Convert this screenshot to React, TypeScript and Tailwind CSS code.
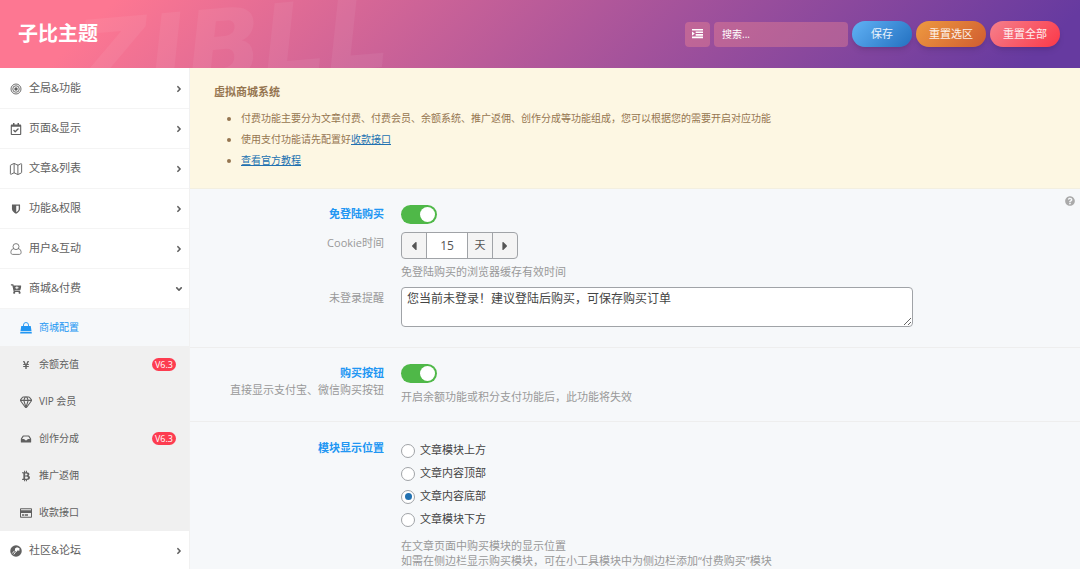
import { useState } from "react"
import type { ComponentType, ReactNode } from "react"
import cn from "clsx"
import { Gem, Map } from "lucide-react"
import {
  FaAngleDown,
  FaAngleRight,
  FaBtc,
  FaCaretLeft,
  FaCaretRight,
  FaCartPlus,
  FaInbox,
  FaQuestionCircle,
  FaRegCalendarCheck,
  FaRegCreditCard,
  FaYenSign,
} from "react-icons/fa"

type IconType = ComponentType<{ className?: string }>

type MenuItem = {
  label: string;
  icon: IconType;
  iconClass?: string;
  badge?: string;
  active?: boolean;
  children?: MenuItem[];
};

function TargetIcon({ className }: { className?: string }) {
  return (
    <svg viewBox="0 0 24 24" className={className} fill="none" stroke="currentColor" strokeWidth="1.8">
      <circle cx="12" cy="12" r="10" />
      <circle cx="12" cy="12" r="6.5" />
      <circle cx="12" cy="12" r="3.5" fill="currentColor" stroke="none" />
    </svg>
  );
}

function ShieldIcon({ className }: { className?: string }) {
  return (
    <svg viewBox="0 0 24 24" className={className}>
      <path d="M3 2h18v10c0 5-5 8.500-9 10.500C8 20.500 3 17 3 12z" fill="currentColor" />
      <path d="M12.500 5H18v7c0 3-2.500 5.500-5.500 7z" fill="#fff" />
    </svg>
  );
}

function UserIcon({ className }: { className?: string }) {
  return (
    <svg viewBox="0 0 24 24" className={className} fill="none" stroke="currentColor" strokeWidth="1.6">
      <circle cx="12" cy="7.2" r="6" />
      <path d="M7.6 11.2C3 11.600 1.800 16 1.800 19c0 2.200 1.400 3.800 3.400 3.800h13.600c2 0 3.400-1.600 3.400-3.800 0-3-1.200-7.400-5.800-7.800" />
    </svg>
  );
}

function BagIcon({ className }: { className?: string }) {
  return (
    <svg viewBox="0 0 24 24" className={className}>
      <path d="M2.500 8h19L23 18H1zM.8 19.500h22.400l.5 3.500H.3z" fill="currentColor" />
      <path d="M7 11V6a5 5 0 0 1 10 0v5" fill="none" stroke="currentColor" strokeWidth="1.800" />
    </svg>
  );
}

function ForumIcon({ className }: { className?: string }) {
  return (
    <svg viewBox="0 0 24 24" className={className}>
      <circle cx="12" cy="12" r="11.500" fill="currentColor" />
      <path d="M10 7l4-2.500 5 2-.5 5.500-3-1.500-2.500 3.500-3-2z" fill="#fff" />
      <path d="M9 11.500L4.500 17M11 14l-3.500 5" stroke="#fff" strokeWidth="1.800" fill="none" />
    </svg>
  );
}

function IndentIcon({ className }: { className?: string }) {
  return (
    <svg viewBox="0 0 24 20" className={className} fill="currentColor">
      <path d="M0 0h24v3.500H0zM8 5.500h16V9H8zM8 11h16v3.500H8zM0 16.500h24V20H0zM0 5.500l6 4.500-6 4.500z" />
    </svg>
  );
}

const menu: MenuItem[] = [
  { label: "全局&功能", icon: TargetIcon },
  { label: "页面&显示", icon: FaRegCalendarCheck },
  { label: "文章&列表", icon: Map, iconClass: "scale-125 stroke-[1.5]" },
  { label: "功能&权限", icon: ShieldIcon, iconClass: "scale-90" },
  { label: "用户&互动", icon: UserIcon },
  {
    label: "商城&付费",
    icon: FaCartPlus,
    iconClass: "scale-90",
    children: [
      { label: "商城配置", icon: BagIcon, active: true },
      { label: "余额充值", icon: FaYenSign, iconClass: "scale-75", badge: "V6.3" },
      { label: "VIP 会员", icon: Gem, iconClass: "scale-110" },
      { label: "创作分成", icon: FaInbox, iconClass: "scale-90", badge: "V6.3" },
      { label: "推广返佣", icon: FaBtc, iconClass: "scale-90" },
      { label: "收款接口", icon: FaRegCreditCard },
    ],
  },
  { label: "社区&论坛", icon: ForumIcon },
];

const positions = ["文章模块上方", "文章内容顶部", "文章内容底部", "文章模块下方"];

function Header() {
  const pill = "h-[26px] rounded-full text-[11px] text-white/90 shadow-md";

  return (
    <header className="relative flex h-[68px] items-center justify-between overflow-hidden bg-[linear-gradient(135deg,#fd7792_10%,#b0579a_53%,#663aa0_95%)] pr-5 pl-[18px]">
      <span
        aria-hidden="true"
        className="absolute top-1 left-[76px] -rotate-5 font-['DejaVu_Sans',sans-serif] text-[100px] leading-[84px] font-bold text-white/6 italic select-none"
      >
        ZIBLL
      </span>
      <h1 className="relative text-[20px] font-bold text-white">子比主题</h1>
      <div className="relative flex items-center gap-1">
        <button aria-label="展开" className="flex size-[25px] items-center justify-center rounded-sm bg-[#ff9090]/35 text-white">
          <IndentIcon className="w-[11px]" />
        </button>
        <input
          type="search"
          aria-label="搜索"
          placeholder="搜索..."
          className="h-[25px] w-[134px] rounded-sm bg-[#ff9090]/35 px-2 text-[10px] text-white outline-none placeholder:text-white"
        />
        <button className={cn(pill, "w-[60px] bg-[linear-gradient(135deg,#61b2f5,#2370c0)]")}>保存</button>
        <button className={cn(pill, "w-[70px] bg-[linear-gradient(135deg,#ee9a40,#d05c30)]")}>重置选区</button>
        <button className={cn(pill, "w-[70px] bg-[linear-gradient(135deg,#f5808c,#fb3848)]")}>重置全部</button>
      </div>
    </header>
  );
}

function Sidebar() {
  return (
    <nav className="w-[190px] shrink-0 border-r border-[#f1f1f1] bg-white pt-px text-[#606060]">
      <ul>
        {menu.map(({ label, icon: Icon, iconClass, children }) => (
          <li key={label}>
            <a
              href="#"
              className="flex h-10 items-center border-b border-[#f4f4f4] pr-[5px] pl-[10px] text-[11px]"
            >
              <Icon className={cn("mr-[7px] h-3 w-3 shrink-0", iconClass)} />
              <span className="flex-1">{label}</span>
              {children ? <FaAngleDown className="size-[10px]" /> : <FaAngleRight className="size-[10px]" />}
            </a>
            {children && (
              <ul className="bg-[#f0f0f0]">
                {children.map(({ label, icon: SubIcon, iconClass, badge, active }) => (
                  <li key={label}>
                    <a
                      href="#"
                      className={cn(
                        "flex h-[37px] items-center pr-[13px] pl-5 text-[10px]",
                        active && "bg-[#f6f8fa] text-[#2196f3]",
                      )}
                    >
                      <SubIcon className={cn("mr-[7px] h-3 w-3 shrink-0", iconClass)} />
                      <span className="flex-1">{label}</span>
                      {badge && (
                        <span className="rounded-full bg-[#fd3c50] px-[3px] text-[9px] leading-[13px] text-white">
                          {badge}
                        </span>
                      )}
                    </a>
                  </li>
                ))}
              </ul>
            )}
          </li>
        ))}
      </ul>
    </nav>
  );
}

function Notice() {
  return (
    <section className="border-b border-[#f3efe0] bg-[#fdf7e3] px-6 pt-4 pb-[17px] text-[#957550]">
      <h2 className="text-[11px] leading-4 font-bold">虚拟商城系统</h2>
      <ul className="mt-2 list-disc pl-[27px] text-[10px] leading-[21px]">
        <li>付费功能主要分为文章付费、付费会员、余额系统、推广返佣、创作分成等功能组成，您可以根据您的需要开启对应功能</li>
        <li>
          使用支付功能请先配置好<a href="#" className="text-[#2271b1] underline">收款接口</a>
        </li>
        <li>
          <a href="#" className="text-[#2271b1] underline">查看官方教程</a>
        </li>
      </ul>
    </section>
  );
}

type RowProps = {
  label: ReactNode;
  htmlFor?: string;
  sub?: string;
  main?: boolean;
  children: ReactNode;
};

function Row({ label, htmlFor, sub, main, children }: RowProps) {
  return (
    <div className="flex gap-[17px]">
      <div className="w-[170px] shrink-0 text-right text-[11px] leading-[17px] text-[#999]">
        <label htmlFor={htmlFor} className={cn("block", main ? "font-bold text-[#2196f3]" : "pt-[2px]")}>
          {label}
        </label>
        {sub && <p>{sub}</p>}
      </div>
      <div className="min-w-0 flex-1">{children}</div>
    </div>
  );
}

function Switch({ id }: { id: string }) {
  const [on, setOn] = useState(true);

  return (
    <input
      id={id}
      type="checkbox"
      role="switch"
      checked={on}
      onChange={() => setOn(!on)}
      className="block h-[19px] w-9 appearance-none rounded-full bg-[#aaa] p-[2px] before:block before:size-[15px] before:rounded-full before:bg-white checked:bg-[#4fb848] checked:before:ml-[17px]"
    />
  );
}

function Hint({ children }: { children: ReactNode }) {
  return <p className="text-[11px] leading-[15px] text-[#999]">{children}</p>;
}

export default function App() {
  const [days, setDays] = useState(15);
  const [position, setPosition] = useState("文章内容底部");

  return (
    <div className="flex min-h-screen flex-col bg-[#f6f8fa] font-['Open_Sans','Noto_Sans_CJK_SC',sans-serif]">
      <Header />
      <div className="flex flex-1">
        <Sidebar />
        <main className="min-w-0 flex-1">
          <Notice />

          <section className="relative flex flex-col gap-2 border-b border-[#eee] px-6 pt-4 pb-5">
            <button aria-label="帮助" className="absolute top-[7px] right-[5px] text-[#aaa]">
              <FaQuestionCircle className="size-[10px]" />
            </button>
            <Row label="免登陆购买" htmlFor="guest-buy" main>
              <Switch id="guest-buy" />
            </Row>
            <Row label="Cookie时间" htmlFor="cookie-days">
              <div className="flex h-[27px] w-[117px] overflow-hidden rounded-sm border border-[#a0a3a7] bg-[#f4f4f4] text-[#555]">
                <button
                  aria-label="减少"
                  onClick={() => setDays(days - 1)}
                  className="flex w-6 items-center justify-center"
                >
                  <FaCaretLeft className="size-[14px]" />
                </button>
                <input
                  id="cookie-days"
                  inputMode="numeric"
                  value={days}
                  onChange={(e) => setDays(Number(e.target.value) || 0)}
                  className="min-w-0 flex-1 border-x border-[#a0a3a7] bg-white text-center text-[12px] outline-none"
                />
                <span className="flex w-6 items-center justify-center text-[11px]">天</span>
                <button
                  aria-label="增加"
                  onClick={() => setDays(days + 1)}
                  className="flex w-[25px] items-center justify-center border-l border-[#a0a3a7]"
                >
                  <FaCaretRight className="size-[14px]" />
                </button>
              </div>
              <div className="mt-[5px]">
                <Hint>免登陆购买的浏览器缓存有效时间</Hint>
              </div>
            </Row>
            <Row label="未登录提醒" htmlFor="login-tip">
              <textarea
                id="login-tip"
                defaultValue="您当前未登录！建议登陆后购买，可保存购买订单"
                className="block h-10 w-full max-w-lg rounded-sm border border-[#a0a3a7] bg-white px-[5px] py-[2px] text-[12px] leading-[18px] text-[#444] outline-none"
              />
            </Row>
          </section>

          <section className="border-b border-[#eee] px-6 pt-4 pb-[17px]">
            <Row label="购买按钮" htmlFor="buy-button" sub="直接显示支付宝、微信购买按钮" main>
              <Switch id="buy-button" />
              <div className="mt-[6px]">
                <Hint>开启余额功能或积分支付功能后，此功能将失效</Hint>
              </div>
            </Row>
          </section>

          <section className="px-6 pt-[17px]">
            <Row label="模块显示位置" main>
              <div role="radiogroup" aria-label="模块显示位置">
                {positions.map((name) => (
                  <label key={name} className="flex h-[23px] items-center gap-[5px] text-[11px] text-[#444]">
                    <input
                      type="radio"
                      name="position"
                      checked={position === name}
                      onChange={() => setPosition(name)}
                      className="flex size-[14px] appearance-none items-center justify-center rounded-full border border-[#a0a3a7] bg-white before:size-[7px] before:rounded-full checked:before:bg-[#2271b1]"
                    />
                    {name}
                  </label>
                ))}
              </div>
              <div className="mt-[7px]">
                <Hint>在文章页面中购买模块的显示位置</Hint>
                <Hint>如需在侧边栏显示购买模块，可在小工具模块中为侧边栏添加“付费购买”模块</Hint>
              </div>
            </Row>
          </section>
        </main>
      </div>
    </div>
  );
}
